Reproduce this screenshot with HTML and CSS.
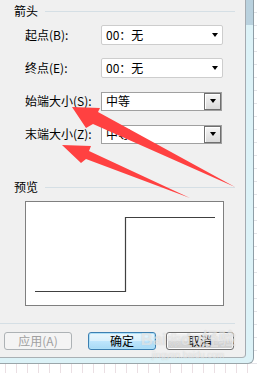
FILE: index.html
```html
<!DOCTYPE html>
<html lang="zh-CN">
<head>
<meta charset="utf-8">
<title>箭头</title>
<link rel="stylesheet" href="styles.css">
</head>
<body>
<div class="screen">
  <div class="frame">
    <div class="dialog">
      <div class="group-title"><span class="gt-text">箭头</span><i class="rule"></i></div>
      <div class="rows">
        <div class="row">
          <span class="label">起点(B):</span>
          <div class="combo modern"><span class="value">00：无</span><i class="caret"></i></div>
        </div>
        <div class="row">
          <span class="label">终点(E):</span>
          <div class="combo modern"><span class="value">00：无</span><i class="caret"></i></div>
        </div>
        <div class="row">
          <span class="label">始端大小(S):</span>
          <div class="combo classic"><span class="value">中等</span><span class="drop"><i class="caret"></i></span></div>
        </div>
        <div class="row">
          <span class="label">末端大小(Z):</span>
          <div class="combo classic"><span class="value">中等</span><span class="drop"><i class="caret"></i></span></div>
        </div>
      </div>
      <div class="group-title preview-title"><span class="gt-text">预览</span><i class="rule"></i></div>
      <div class="preview">
        <svg class="preview-line" width="197" height="103" viewBox="0 0 197 103">
          <polyline points="9,89.5 99.5,89.5 99.5,15.5 189,15.5" fill="none" stroke="#404040" stroke-width="1.2"/>
        </svg>
      </div>
      <div class="sep"></div>
      <div class="buttons">
        <span class="btn disabled">应用(A)</span>
        <span class="btn primary">确定</span>
        <span class="btn normal">取消</span>
      </div>
    </div>
  </div>
  <svg class="arrows" width="257" height="373" viewBox="0 0 257 373">
    <polygon points="72,107 100,108 98,112 235,187 93,124 86,128" fill="#ff4141"/>
    <polygon points="62,145 91,146 89,151 190,198 86,159 81,163" fill="#ff4141"/>
  </svg>
  <div class="watermark">
    <span class="wm-logo">Bai<span class="paw">❀</span>du经验</span>
    <span class="wm-url">jingyan.baidu.com</span>
  </div>
</div>
</body>
</html>
```

FILE: styles.css
```css
* { box-sizing: border-box; }

html, body {
  margin: 0;
  padding: 0;
}

body {
  width: 257px;
  height: 373px;
  overflow: hidden;
  font-family: "Noto Sans CJK SC", "Noto Sans", sans-serif;
  font-size: 12px;
  color: #000;
  background-color: #fff;
  background-image:
    repeating-linear-gradient(90deg, transparent 0 5px, #eadfe3 5px 6px, transparent 6px 11px),
    repeating-linear-gradient(180deg, transparent 0 12px, #e4e4e8 12px 13px);
}

.screen {
  position: relative;
  width: 257px;
  height: 373px;
}

.frame {
  width: 254px;
  height: 364px;
  background: linear-gradient(180deg, #b9d1de 0 25px, #dcf2f7 25px);
  border-right: 1px solid #8e9ea6;
  border-bottom: 1px solid #9aa6aa;
  border-bottom-right-radius: 6px;
}

.dialog {
  width: 246px;
  height: 358px;
  background: #f0f0f0;
  border-right: 1px solid #a4aab0;
  border-bottom: 1px solid #a9b0b4;
  border-bottom-right-radius: 4px;
  padding-top: 5px;
  display: flex;
  flex-direction: column;
}

.group-title {
  display: flex;
  align-items: center;
  height: 12px;
  line-height: 12px;
  padding-left: 14px;
  padding-right: 10px;
}

.gt-text {
  white-space: nowrap;
}

.rule {
  flex: 1;
  height: 1px;
  margin-left: 7px;
  background: #d5dfe5;
}

.rows {
  margin-top: 8px;
  display: flex;
  flex-direction: column;
  gap: 13px;
}

.row {
  display: flex;
  align-items: center;
  height: 20px;
  padding-left: 25px;
}

.label {
  width: 76px;
  white-space: nowrap;
  line-height: 12px;
}

.combo {
  position: relative;
  width: 122px;
  height: 20px;
  background: #fff;
  display: flex;
  align-items: center;
  padding-left: 4px;
}

.combo .value {
  flex: 1;
  line-height: 12px;
}

.combo.modern {
  border: 1px solid #cdcdcd;
  border-radius: 2px;
}

.combo.modern .caret {
  margin-right: 4px;
}

.caret {
  width: 0;
  height: 0;
  border-left: 3.5px solid transparent;
  border-right: 3.5px solid transparent;
  border-top: 4px solid #000;
}

.combo.classic {
  width: 121px;
  height: 19px;
  border: 1px solid #a0a0a0;
  padding-right: 0;
}

.drop {
  width: 17px;
  height: 17px;
  border: 1px solid #6f6f6f;
  box-shadow: inset 1px 1px 0 #fff;
  background: linear-gradient(180deg, #f6f6f6, #dadada);
  display: flex;
  align-items: center;
  justify-content: center;
}

.preview-title {
  margin-top: 37px;
}

.preview {
  margin-top: 8px;
  margin-left: 25px;
  width: 199px;
  height: 105px;
  background: #fff;
  border: 1px solid #7f7f7f;
}

.preview-line {
  display: block;
}

.sep {
  margin-top: 17px;
  width: 235px;
  height: 1px;
  background: #d5dfe5;
}

.buttons {
  margin-top: 8px;
  padding-left: 4px;
  display: flex;
}

.btn {
  width: 68px;
  height: 18px;
  border-radius: 3px;
  display: flex;
  align-items: center;
  justify-content: center;
  line-height: 12px;
}

.btn.disabled {
  border: 1px solid #adb2b5;
  background: #f4f4f4;
  color: #a0a0a0;
}

.btn.primary {
  margin-left: 16px;
  border: 1px solid #3c7fb1;
  box-shadow: inset 0 0 0 1px #aee0f8;
  background: linear-gradient(180deg, #e9f6fd 0, #d9f0fc 50%, #bee6fd 51%, #a7d9f5 100%);
}

.btn.normal {
  margin-left: 10px;
  border: 1px solid #707070;
  box-shadow: inset 0 0 0 1px #fcfcfc;
  background: linear-gradient(180deg, #f2f2f2 0, #ebebeb 50%, #dddddd 51%, #cfcfcf 100%);
}

.arrows {
  position: absolute;
  left: 0;
  top: 0;
  pointer-events: none;
}

.watermark {
  position: absolute;
  left: 138px;
  top: 330px;
  width: 100px;
  display: flex;
  flex-direction: column;
  align-items: center;
  color: rgba(255, 255, 255, 0.55);
  text-shadow: 0 0 1px rgba(120, 120, 120, 0.35);
  pointer-events: none;
}

.wm-logo {
  font-family: "Liberation Sans", "Noto Sans CJK SC", sans-serif;
  font-size: 17px;
  font-weight: bold;
  line-height: 20px;
  white-space: nowrap;
}

.paw {
  font-size: 14px;
}

.wm-url {
  font-family: "Liberation Sans", sans-serif;
  font-size: 9px;
  line-height: 10px;
  white-space: nowrap;
}
```
